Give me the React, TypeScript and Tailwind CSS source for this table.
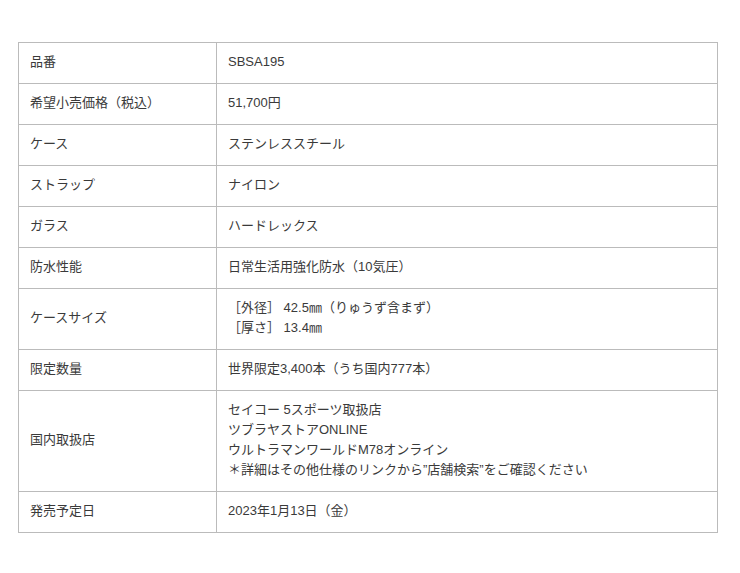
const rows: [string, string[]][] = [
  ["品番", ["SBSA195"]],
  ["希望小売価格（税込）", ["51,700円"]],
  ["ケース", ["ステンレススチール"]],
  ["ストラップ", ["ナイロン"]],
  ["ガラス", ["ハードレックス"]],
  ["防水性能", ["日常生活用強化防水（10気圧）"]],
  ["ケースサイズ", ["［外径］ 42.5㎜（りゅうず含まず）", "［厚さ］ 13.4㎜"]],
  ["限定数量", ["世界限定3,400本（うち国内777本）"]],
  [
    "国内取扱店",
    [
      "セイコー 5スポーツ取扱店",
      "ツブラヤストアONLINE",
      "ウルトラマンワールドM78オンライン",
      "＊詳細はその他仕様のリンクから”店舗検索”をご確認ください",
    ],
  ],
  ["発売予定日", ["2023年1月13日（金）"]],
];

export default function App() {
  return (
    <div
      className="min-h-[573px] bg-white px-[18px] pt-[42px] text-[13px] leading-[20px] text-[#3a3a3a]"
      style={{ fontFamily: '"Liberation Sans", "Noto Sans CJK JP", sans-serif' }}
    >
      <table className="w-[700px] border-collapse">
        <tbody>
          {rows.map(([label, lines]) => (
            <tr key={label}>
              <th className="w-[198px] border border-[#bbb] px-[11px] pt-[9px] pb-[11px] text-left align-middle font-normal">
                {label}
              </th>
              <td className="border border-[#bbb] px-[11px] pt-[9px] pb-[11px] align-middle">
                {lines.map((l) => (
                  <div key={l}>{l}</div>
                ))}
              </td>
            </tr>
          ))}
        </tbody>
      </table>
    </div>
  );
}
